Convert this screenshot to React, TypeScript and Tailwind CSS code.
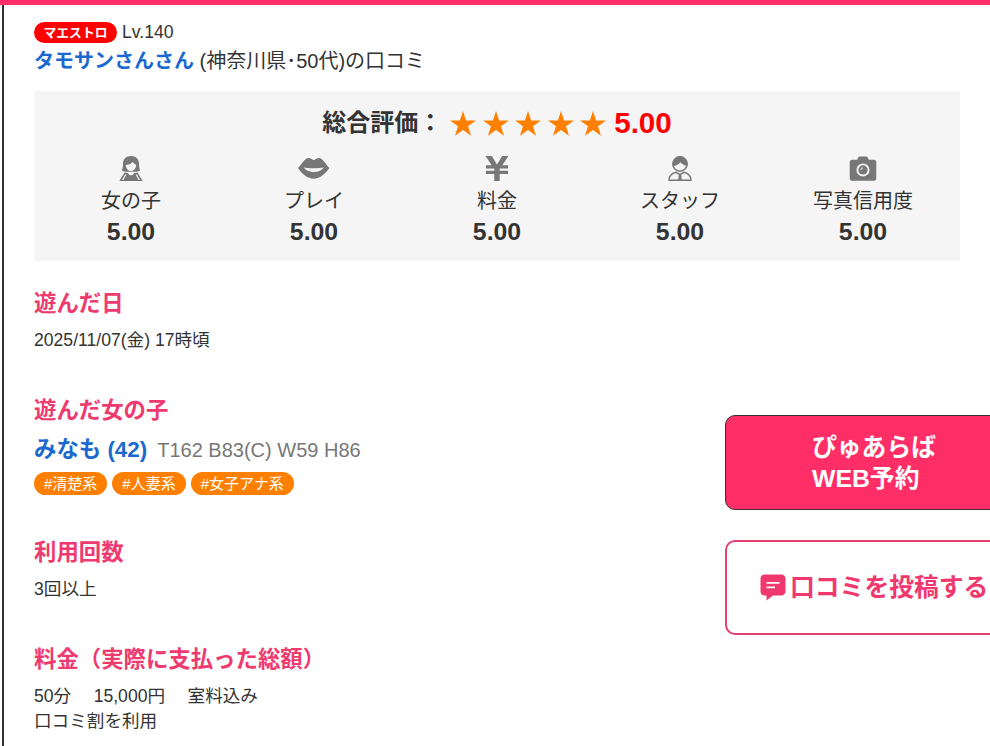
const font = { fontFamily: '"Liberation Sans", "Noto Sans CJK JP", sans-serif' };

function Woman() {
  return (
    <svg width="24" height="25" viewBox="0 0 24 25" fill="#777">
      <path d="M12 0c-5 0-8 3.400-8 7.400 0 2.800-.4 5-1.200 7 1.800 1 3.800 1.300 5.200 1.300h8c1.400 0 3.400-.3 5.200-1.300-.8-2-1.200-4.200-1.200-7C20 3.400 17 0 12 0z" />
      <path d="M6.800 9c2.700 0 5.200-1 7-3 .9 1.400 2 2.200 3.400 2.700 0 3.600-2.300 6.300-5.200 6.300-2.800 0-5.200-2.600-5.200-6z" fill="#f5f5f5" />
      <path d="M5.500 16.500 0.300 25h23.400l-5.200-8.500-3.500 .5c-.6 1.500-1.600 2.300-3 2.300s-2.400-.8-3-2.300z" />
      <path d="M6 18.500 3 24h1.400l3-5.500zM18 18.500l3 5.500h-1.400l-3-5.500z" fill="#f5f5f5" />
    </svg>
  );
}

function Lips() {
  return (
    <svg width="32" height="23" viewBox="0 0 32 23">
      <path fill="#777" d="M0 10C4 6 7 0 10.500 0 12.500 0 14 1.500 15.700 2.300 17.500 1.500 19 0 21 0 24.500 0 27.500 6 31.400 10 27 16 22 20.700 15.700 20.700 9.500 20.700 4 16 0 10z" />
      <path fill="#f5f5f5" d="M5.500 9.500C10 10.500 21 10.500 26 9.500 22 13.500 19 14 15.700 14 12.500 14 9.500 13.500 5.500 9.500z" />
    </svg>
  );
}

function Yen() {
  return (
    <svg width="24" height="25" viewBox="0 0 24 25" fill="#777">
      <path d="M0.500 0h6.300L12 8.500 17.200 0h6.300l-6.200 9.300H23v3.300h-8.300v2.200H23v3.300h-8.300V25H9.300v-6.900H1v-3.300h8.300v-2.200H1V9.300h5.700z" />
    </svg>
  );
}

function Man() {
  return (
    <svg width="24" height="25" viewBox="0 0 24 25" fill="#777">
      <circle cx="12" cy="8" r="7.200" fill="#f5f5f5" stroke="#777" strokeWidth="1.400" />
      <path d="M12 0.500a7.500 7.500 0 0 0-7.200 9.600c3-.3 6-1.500 7.700-3.900 1.400 1.900 3.500 3.100 6.700 3.900A7.500 7.500 0 0 0 12 .5z" />
      <path d="M1 24.300c0-4 2.700-6.900 7-8l4 2.300 4-2.300c4.300 1.100 7 4 7 8z" fill="none" stroke="#777" strokeWidth="1.400" />
      <path d="M10.800 18.500h2.400l.6 6h-3.600z" />
    </svg>
  );
}

function Camera() {
  return (
    <svg width="28" height="25" viewBox="0 0 28 26" fill="#777">
      <path d="M2.500 3.800H8l1.200-2.600C9.500.7 10 .4 10.600.4h6.800c.6 0 1.100.3 1.400.8L20 3.800h5.500c1.300 0 2.300 1 2.300 2.300v17.300c0 1.300-1 2.300-2.300 2.300h-23C1.200 25.700.2 24.700.2 23.400V6.100c0-1.300 1-2.300 2.300-2.300z" />
      <circle cx="14" cy="14.500" r="6.800" fill="#f5f5f5" />
      <circle cx="14" cy="14.500" r="4.800" fill="#777" />
      <path d="M11.800 14.500a2.200 2.200 0 0 1 2.200-2.200" stroke="#f5f5f5" strokeWidth="1" fill="none" />
    </svg>
  );
}

function Bubble() {
  return (
    <svg width="26" height="27" viewBox="0 0 26 27" className="shrink-0">
      <path d="M4.500 0.500h17c2.200 0 4 1.800 4 4v13c0 2.200-1.800 4-4 4H13l-6.500 5v-5H4.500c-2.200 0-4-1.800-4-4v-13c0-2.200 1.800-4 4-4z" fill="#f0386f" />
      <path d="M6.500 8h13v1.800h-13zM6.500 12.500h8.500v1.800H6.500z" fill="#fff" />
    </svg>
  );
}

function Star() {
  return (
    <svg width="26" height="25" viewBox="0 0 26 25" fill="#ff8000" className="shrink-0">
      <path d="M13 0l3.100 9.400H26l-8 5.800 3 9.600-8-5.900-8 5.900 3-9.600-8-5.800h9.900z" />
    </svg>
  );
}

const ratings = [
  { label: "女の子", icon: <Woman /> },
  { label: "プレイ", icon: <Lips /> },
  { label: "料金", icon: <Yen /> },
  { label: "スタッフ", icon: <Man /> },
  { label: "写真信用度", icon: <Camera /> },
];

function Heading({ children }: { children: React.ReactNode }) {
  return <h3 className="text-[22.4px] leading-[30px] font-bold text-[#ee3a6f]">{children}</h3>;
}

export default function App() {
  return (
    <div style={font} className="w-[990px] h-[746px] overflow-hidden bg-white text-[#333] border-t-[5px] border-[#ff2e66]">
      <div className="ml-[2px] h-full border-l-2 border-[#333] pl-[30px] pt-[16px]">
        <div className="flex items-center h-[23px]">
          <span className="flex items-center justify-center w-[83px] h-[21px] rounded-full bg-[#f00] text-white text-[12.8px] font-bold">マエストロ</span>
          <span className="ml-[5px] text-[17.6px]">Lv.140</span>
        </div>
        <p className="text-[20px] leading-[30px] mt-[2px]">
          <span className="font-bold text-[#1b69cf]">タモサンさんさん</span> (神奈川県･50代)の口コミ
        </p>

        <section className="mt-[15px] w-[926px] h-[170px] bg-[#f5f5f5] px-[5.5px] pt-[12px]">
          <div className="flex items-center justify-center h-[40px]">
            <span className="text-[24px] font-bold">総合評価：</span>
            <div className="flex gap-[6.500px] ml-[8px]">
              <Star /><Star /><Star /><Star /><Star />
            </div>
            <span className="ml-[8px] text-[29.6px] font-bold text-[#f00]">5.00</span>
          </div>
          <div className="grid grid-cols-5 mt-[10px]">
            {ratings.map((r) => (
              <div key={r.label} className="flex flex-col items-center">
                <div className="h-[28px] flex items-end justify-center">{r.icon}</div>
                <div className="text-[20px] leading-[30px] mt-[5px]">{r.label}</div>
                <div className="text-[24.8px] leading-[32px] font-bold">5.00</div>
              </div>
            ))}
          </div>
        </section>

        <div className="flex">
          <div className="w-[691px] shrink-0">
            <div className="mt-[28px]">
              <Heading>遊んだ日</Heading>
              <p className="mt-[9px] text-[17.6px] leading-[24px]">2025/11/07(金) 17時頃</p>
            </div>
            <div className="mt-[44px]">
              <Heading>遊んだ女の子</Heading>
              <p className="mt-[8px] leading-[32px] flex items-baseline">
                <span className="text-[22.4px] font-bold text-[#1b69cf]">みなも (42)</span>
                <span className="ml-[10px] text-[20px] text-[#777]">T162 B83(C) W59 H86</span>
              </p>
              <div className="flex gap-[5px] mt-[6px]">
                {["#清楚系", "#人妻系", "#女子アナ系"].map((t) => (
                  <span key={t} className="h-[23px] px-[10px] rounded-full bg-[#ff8000] text-white text-[15px] leading-[23px]">{t}</span>
                ))}
              </div>
            </div>
            <div className="mt-[43px]">
              <Heading>利用回数</Heading>
              <p className="mt-[9px] text-[17.6px] leading-[24px]">3回以上</p>
            </div>
            <div className="mt-[44px]">
              <Heading>料金（実際に支払った総額）</Heading>
              <p className="mt-[9px] text-[17.6px] leading-[25px] whitespace-pre">50分　 15,000円　 室料込み</p>
              <p className="text-[17.6px] leading-[24px]">口コミ割を利用</p>
            </div>
          </div>
          <div className="shrink-0 w-[300px] pt-[154px]">
            <div className="h-[95px] rounded-[10px] border border-[#333] bg-[#ff2e66] flex items-center pl-[86px] text-white text-[24.8px] leading-[31px] font-bold">
              <span>ぴゅあらば<br />WEB予約</span>
            </div>
            <div className="mt-[30px] h-[95px] rounded-[10px] border-2 border-[#e5406f] bg-white flex items-center gap-[4px] pl-[33px] text-[#f0386f] text-[24.8px] font-bold whitespace-nowrap">
              <Bubble />
              <span>口コミを投稿する</span>
            </div>
          </div>
        </div>
      </div>
    </div>
  );
}
